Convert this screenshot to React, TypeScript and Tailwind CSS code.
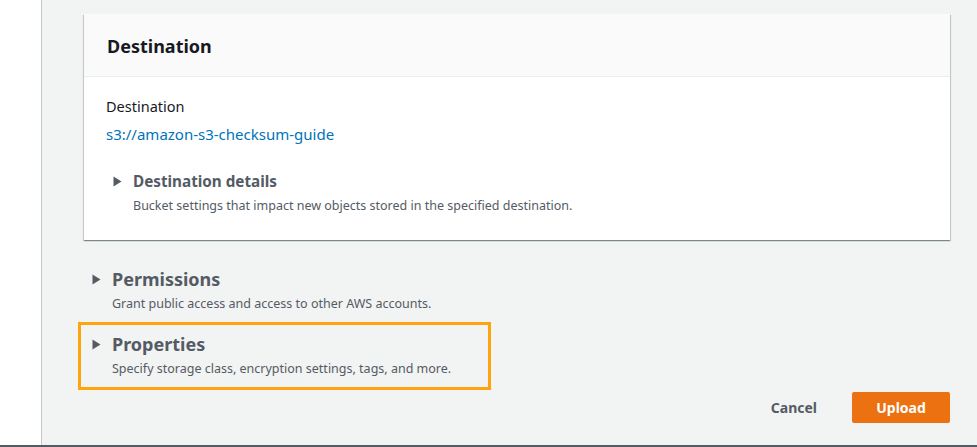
import React from 'react';

const Caret: React.FC<{ className?: string }> = ({ className }) => (
    <svg width="9" height="11" viewBox="0 0 9 11" className={className}>
        <path d="M0.5 0.5 L8.5 5.5 L0.5 10.5 Z" fill="#545b64" />
    </svg>
);

const App: React.FC = () => {
    return (
        <div
            className="w-[977px] h-[447px] flex border-b-2 border-[#545b64] overflow-hidden"
            style={{ fontFamily: '"Noto Sans", Arial, sans-serif' }}
        >
            {/* Left nav strip */}
            <div className="w-[42px] bg-white border-r border-[#c6c8c8] shrink-0"></div>

            {/* Main content */}
            <div className="flex-1 bg-[#f2f3f3] pl-[42px] pr-[27px] pt-[14px]">
                {/* Destination card */}
                <div className="bg-white shadow-[0_1px_1px_0_rgba(0,28,36,0.3),1px_1px_1px_0_rgba(0,28,36,0.15),-1px_1px_1px_0_rgba(0,28,36,0.15)]">
                    <div className="h-[63px] bg-[#fafafa] border-b border-[#eaeded] px-[23px] pt-[2px] flex items-center">
                        <h2 className="text-[18px] font-bold text-[#16191f] leading-[24px]">Destination</h2>
                    </div>
                    <div className="px-[22px] pt-[19px] pb-[25px]">
                        <div className="text-[14.5px] leading-[20px] text-[#16191f]">Destination</div>
                        <a className="block mt-[8px] text-[15px] leading-[20px] text-[#0073bb]">s3://amazon-s3-checksum-guide</a>
                        <div className="mt-[26px] pl-[7px]">
                            <div className="flex items-center">
                                <Caret className="mr-[11px]" />
                                <span className="text-[15.25px] leading-[22px] font-bold text-[#545b64]">Destination details</span>
                            </div>
                            <p className="mt-[5px] pl-[20px] text-[12.5px] leading-[18px] text-[#545b64]">
                                Bucket settings that impact new objects stored in the specified destination.
                            </p>
                        </div>
                    </div>
                </div>

                {/* Permissions */}
                <div className="mt-[27px] pl-[8px]">
                    <div className="flex items-center">
                        <Caret className="mr-[11px]" />
                        <span className="text-[18px] leading-[24px] font-bold text-[#545b64]">Permissions</span>
                    </div>
                    <p className="mt-[4px] pl-[20px] text-[12.5px] leading-[18px] text-[#545b64]">
                        Grant public access and access to other AWS accounts.
                    </p>
                </div>

                {/* Properties (highlighted) */}
                <div className="mt-[9px] -ml-[6px] w-[413px] border-[3px] border-[#ffa40f] pl-[11px] pt-[7px] pb-[9px]">
                    <div className="flex items-center">
                        <Caret className="mr-[11px]" />
                        <span className="text-[18px] leading-[24px] font-bold text-[#545b64]">Properties</span>
                    </div>
                    <p className="mt-[4px] pl-[20px] text-[12.5px] leading-[18px] text-[#545b64]">
                        Specify storage class, encryption settings, tags, and more.
                    </p>
                </div>

                {/* Actions */}
                <div className="mt-[2px] flex justify-end items-center">
                    <button className="text-[14px] font-bold text-[#545b64] mr-[35px]">Cancel</button>
                    <button className="w-[98px] h-[31px] bg-[#ec7211] rounded-[2px] text-[14px] font-bold text-white">Upload</button>
                </div>
            </div>
        </div>
    );
};

export default App;
